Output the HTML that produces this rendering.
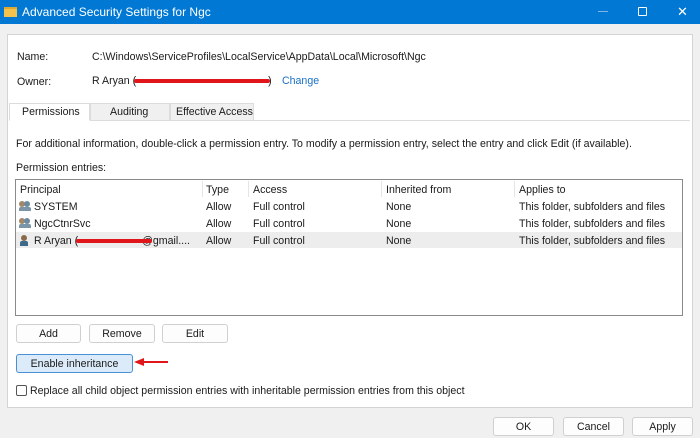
<!DOCTYPE html>
<html><head><style>
*{box-sizing:border-box;margin:0;padding:0}
body{width:700px;height:438px;background:#f0f0f0;font-family:"Liberation Sans",sans-serif;font-size:10.6px;color:#1a1a1a;position:relative;overflow:hidden}
.a{position:absolute;white-space:nowrap}
.btn{position:absolute;background:#fdfdfd;border:1px solid #d0d0d0;border-radius:3px;text-align:center;line-height:18px;height:19px}
.red{position:absolute;height:4px;background:#e0161b;border-radius:2px}
</style></head><body>
<div class="a" style="left:0;top:0;width:700px;height:24px;background:#0078d4"></div>
<div class="a" style="left:4px;top:7px;width:13px;height:10px;background:#f2c14e;border-top:2px solid #e0a82e"></div>
<div class="a" style="left:22px;top:5px;color:#fff;font-size:12px">Advanced Security Settings for Ngc</div>
<div class="a" style="left:598px;top:11px;width:10px;height:1px;background:#7fb6e8"></div>
<div class="a" style="left:638px;top:7px;width:9px;height:9px;border:1px solid #fff;border-radius:1px"></div>
<div class="a" style="left:677px;top:4px;color:#fff;font-size:13px">✕</div>

<div class="a" style="left:7px;top:34px;width:686px;height:374px;background:#fff;border:1px solid #d4d4d4"></div>
<div class="a" style="left:17px;top:51px">Name:</div>
<div class="a" style="left:92px;top:51px">C:\Windows\ServiceProfiles\LocalService\AppData\Local\Microsoft\Ngc</div>
<div class="a" style="left:17px;top:76px">Owner:</div>
<div class="a" style="left:92px;top:75px">R Aryan (<span style="display:inline-block;width:132px"></span>)</div>
<div class="red" style="left:134px;top:79px;width:136px"></div>
<div class="a" style="left:282px;top:75px;color:#1a6fc4">Change</div>

<div class="a" style="left:90px;top:103px;width:80px;height:18px;background:#f0f0f0;border:1px solid #dcdcdc;border-bottom:none"></div>
<div class="a" style="left:170px;top:103px;width:84px;height:18px;background:#f0f0f0;border:1px solid #dcdcdc;border-bottom:none"></div>
<div class="a" style="left:9px;top:120px;width:681px;height:1px;background:#dcdcdc"></div>
<div class="a" style="left:9px;top:103px;width:81px;height:18px;background:#fff;border:1px solid #dcdcdc;border-bottom:1px solid #fff"></div>
<div class="a" style="left:22px;top:106px">Permissions</div>
<div class="a" style="left:110px;top:106px">Auditing</div>
<div class="a" style="left:176px;top:106px">Effective Access</div>

<div class="a" style="left:16px;top:138px">For additional information, double-click a permission entry. To modify a permission entry, select the entry and click Edit (if available).</div>
<div class="a" style="left:16px;top:162px">Permission entries:</div>

<div class="a" style="left:15px;top:179px;width:668px;height:137px;border:1px solid #8a8a8a;background:#fff"></div>
<div class="a" style="left:202px;top:181px;width:1px;height:16px;background:#e5e5e5"></div>
<div class="a" style="left:248px;top:181px;width:1px;height:16px;background:#e5e5e5"></div>
<div class="a" style="left:381px;top:181px;width:1px;height:16px;background:#e5e5e5"></div>
<div class="a" style="left:514px;top:181px;width:1px;height:16px;background:#e5e5e5"></div>
<div class="a" style="left:16px;top:232px;width:666px;height:16px;background:#ededed"></div>
<div class="a" style="left:20px;top:184px">Principal</div><div class="a" style="left:206px;top:184px">Type</div><div class="a" style="left:253px;top:184px">Access</div><div class="a" style="left:386px;top:184px">Inherited from</div><div class="a" style="left:519px;top:184px">Applies to</div>

<div class="a" style="left:19px;top:201px;width:6px;height:6px;border-radius:50%;background:#a28868"></div><div class="a" style="left:24px;top:201px;width:6px;height:6px;border-radius:50%;background:#6b8aa0"></div><div class="a" style="left:19px;top:207px;width:12px;height:4px;background:#7b95a8;border-radius:2px 2px 0 0"></div>
<div class="a" style="left:34px;top:201px">SYSTEM</div><div class="a" style="left:206px;top:201px">Allow</div><div class="a" style="left:253px;top:201px">Full control</div><div class="a" style="left:386px;top:201px">None</div><div class="a" style="left:519px;top:201px">This folder, subfolders and files</div>
<div class="a" style="left:19px;top:218px;width:6px;height:6px;border-radius:50%;background:#a28868"></div><div class="a" style="left:24px;top:218px;width:6px;height:6px;border-radius:50%;background:#6b8aa0"></div><div class="a" style="left:19px;top:224px;width:12px;height:4px;background:#7b95a8;border-radius:2px 2px 0 0"></div>
<div class="a" style="left:34px;top:218px">NgcCtnrSvc</div><div class="a" style="left:206px;top:218px">Allow</div><div class="a" style="left:253px;top:218px">Full control</div><div class="a" style="left:386px;top:218px">None</div><div class="a" style="left:519px;top:218px">This folder, subfolders and files</div>
<div class="a" style="left:21px;top:235px;width:6px;height:6px;border-radius:50%;background:#8a6a4a"></div><div class="a" style="left:20px;top:241px;width:8px;height:5px;background:#3e6a8a;border-radius:2px 2px 0 0"></div>
<div class="a" style="left:34px;top:235px">R Aryan (<span style="display:inline-block;width:64px"></span>@gmail....</div><div class="a" style="left:206px;top:235px">Allow</div><div class="a" style="left:253px;top:235px">Full control</div><div class="a" style="left:386px;top:235px">None</div><div class="a" style="left:519px;top:235px">This folder, subfolders and files</div>
<div class="red" style="left:76px;top:239px;width:76px"></div>

<div class="btn" style="left:16px;top:324px;width:65px">Add</div>
<div class="btn" style="left:89px;top:324px;width:66px">Remove</div>
<div class="btn" style="left:162px;top:324px;width:66px">Edit</div>
<div class="btn" style="left:16px;top:354px;width:117px;background:#dcebfa;border-color:#4a90d6">Enable inheritance</div>
<div class="a" style="left:142px;top:361px;width:26px;height:2px;background:#e0161b"></div>
<div class="a" style="left:134px;top:358px;width:0;height:0;border-top:4px solid transparent;border-bottom:4px solid transparent;border-right:10px solid #e0161b"></div>
<div class="a" style="left:16px;top:385px;width:11px;height:11px;border:1px solid #555;border-radius:2px"></div>
<div class="a" style="left:30px;top:385px">Replace all child object permission entries with inheritable permission entries from this object</div>

<div class="btn" style="left:493px;top:417px;width:61px">OK</div>
<div class="btn" style="left:563px;top:417px;width:61px">Cancel</div>
<div class="btn" style="left:632px;top:417px;width:61px">Apply</div>
</body></html>
